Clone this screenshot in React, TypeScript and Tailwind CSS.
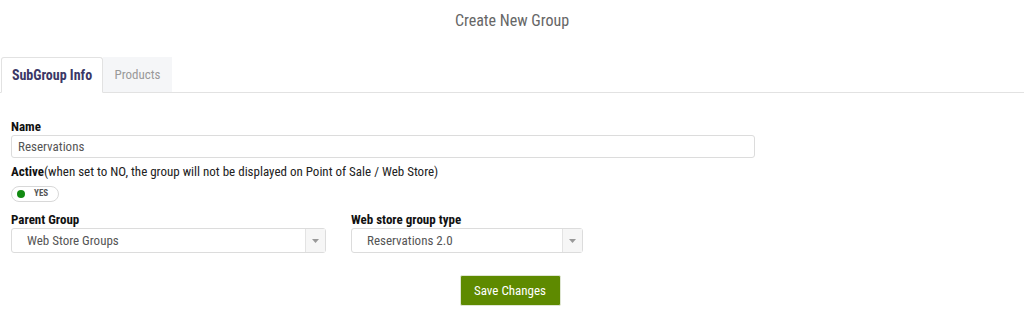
const font = "font-['Roboto',sans-serif] font-stretch-condensed";

function Select({ value, width }: { value: string; width: string }) {
  return (
    <div className={`flex h-[25px] ${width} items-stretch rounded-[3px] border border-[#dcdcdc] bg-white`}>
      <div className="flex flex-1 items-center pl-[15px] text-[13px] text-[#555]">{value}</div>
      <div className="flex w-[20px] items-center justify-center border-l border-[#e3e3e3] bg-[#f6f6f6]">
        <svg width="7" height="4" viewBox="0 0 7 4">
          <path d="M0 0h7L3.5 4z" fill="#999" />
        </svg>
      </div>
    </div>
  );
}

export default function App() {
  return (
    <div className={`${font} h-[313px] w-[1024px] bg-white text-[#222]`}>
      <h1 className="pt-[10px] text-center text-[16px] leading-[22px] text-[#666]">Create New Group</h1>

      {/* Tabs */}
      <div className="mt-[25px] flex border-b border-[#e2e2e2] pl-[1px]">
        <div className="-mb-px flex h-[36px] w-[102px] items-center justify-center rounded-t-[3px] border border-b-white border-[#e2e2e2] bg-white text-[14px] font-bold text-[#3b3766]">
          SubGroup Info
        </div>
        <div className="flex h-[35px] w-[69px] items-center justify-center bg-[#f5f6f8] text-[13px] text-[#999]">
          Products
        </div>
      </div>

      <div className="px-[11px] pt-[25px]">
        <label className="block text-[13px] font-bold leading-[17px] text-[#111]">Name</label>
        <div className="flex h-[23px] w-[744px] items-center rounded-[3px] border border-[#dcdcdc] pl-[6px] text-[13px] text-[#555]">
          Reservations
        </div>

        <div className="mt-[5px] text-[13px] leading-[17px] text-[#222]">
          <span className="font-bold text-[#111]">Active</span>(when set to NO, the group will not be displayed on Point of Sale / Web Store)
        </div>
        <div className="mt-[6px] flex h-[16px] w-[48px] items-center gap-[9px] rounded-full border border-[#d8d8d8] pl-[5px]">
          <span className="h-[8px] w-[8px] rounded-full bg-[#118a11]" />
          <span className="text-[9px] font-bold text-[#555]">YES</span>
        </div>

        <div className="mt-[9px] flex gap-[25px]">
          <div>
            <label className="block text-[13px] font-bold leading-[17px] text-[#111]">Parent Group</label>
            <Select value="Web Store Groups" width="w-[315px]" />
          </div>
          <div>
            <label className="block text-[13px] font-bold leading-[17px] text-[#111]">Web store group type</label>
            <Select value="Reservations 2.0" width="w-[232px]" />
          </div>
        </div>

        <div className="mt-[22px] flex justify-center pr-[4px]">
          <button className="h-[31px] w-[101px] rounded-[2px] border border-[#dfe6d2] bg-[#5e8a00] text-[13px] text-white">
            Save Changes
          </button>
        </div>
      </div>
    </div>
  );
}
